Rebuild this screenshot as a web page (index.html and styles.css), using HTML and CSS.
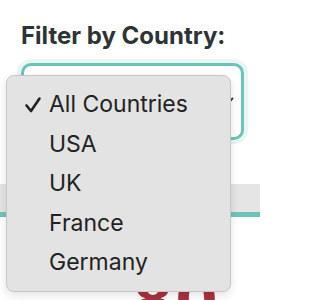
FILE: index.html
```html
<!DOCTYPE html>
<html>
<head>
<meta charset="utf-8">
<link rel="stylesheet" href="styles.css">
</head>
<body>
<div class="page">
  <div class="filter">
    <label class="label">Filter by Country:</label>
    <div class="select">
      <svg class="chev" width="12" height="8" viewBox="0 0 12 8"><path d="M1.5 1.5 L6 6 L10.5 1.5" fill="none" stroke="#333" stroke-width="1.8" stroke-linecap="round" stroke-linejoin="round"/></svg>
    </div>
  </div>
  <div class="thead"></div>
  <div class="big">80</div>
</div>
<div class="menu">
  <div class="item"><svg class="check" width="18" height="18" viewBox="0 0 18 18"><path d="M2.5 9.5 L7 15 L15.5 2.5" fill="none" stroke="#222" stroke-width="2.6" stroke-linecap="round" stroke-linejoin="round"/></svg>All Countries</div>
  <div class="item">USA</div>
  <div class="item">UK</div>
  <div class="item">France</div>
  <div class="item">Germany</div>
</div>
</body>
</html>
```

FILE: styles.css
```css
html, body {
  margin: 0;
  padding: 0;
  background: #ffffff;
  overflow: hidden;
  height: 300px;
}
.page {
  width: 260px;
  height: 300px;
  overflow: hidden;
  font-family: Inter, "Noto Sans", sans-serif;
}
.filter {
  padding: 22px 16px 0 21px;
}
.label {
  display: block;
  font-size: 24px;
  font-weight: 700;
  line-height: 27px;
  color: #2d3436;
  margin-left: 0;
  white-space: nowrap;
}
.select {
  margin-top: 14px;
  height: 71px;
  border: 3px solid #6cc4b8;
  border-radius: 10px;
  box-shadow: 0 0 0 4px rgba(108, 196, 184, 0.15);
  display: flex;
  align-items: center;
  justify-content: flex-end;
  padding-right: 7px;
  background: #fff;
}
.chev {
  display: block;
  margin-top: -2px;
}
.thead {
  margin-top: 44px;
  height: 28px;
  background: #e5e5e6;
  border-bottom: 5px solid #6cc4b8;
}
.big {
  font-size: 60px;
  font-weight: 800;
  color: #a8323e;
  line-height: 60px;
  margin-top: 52px;
  padding-left: 133px;
  letter-spacing: 3px;
  white-space: nowrap;
}
.menu {
  position: absolute;
  left: 6px;
  top: 75px;
  width: 225px;
  height: 217px;
  box-sizing: border-box;
  background: #e3e3e3;
  border: 1px solid #c6c6c6;
  border-radius: 8px;
  box-shadow: 0 3px 10px rgba(0, 0, 0, 0.12);
  padding-top: 9px;
  font-family: Inter, "Noto Sans", sans-serif;
}
.item {
  position: relative;
  font-size: 23px;
  line-height: 39.6px;
  color: #222222;
  padding-left: 42px;
}
.check {
  position: absolute;
  left: 17px;
  top: 11px;
}
```
